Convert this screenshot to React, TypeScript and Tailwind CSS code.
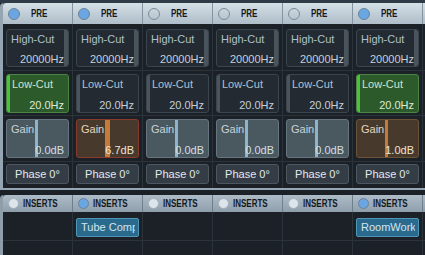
import React from 'react';

type Strip = {
  pre: 'on' | 'off';
  lowCut: boolean;
  gain: number;
  gainBorder?: string;
  insertLed: 'blue' | 'white';
  insert?: string;
};

const strips: Strip[] = [
  { pre: 'on', lowCut: true, gain: 0, insertLed: 'white' },
  { pre: 'on', lowCut: false, gain: 6.7, gainBorder: 'border-[#8a3a2c]', insertLed: 'blue', insert: 'Tube Comp' },
  { pre: 'off', lowCut: false, gain: 0, insertLed: 'white' },
  { pre: 'off', lowCut: false, gain: 0, insertLed: 'white' },
  { pre: 'off', lowCut: false, gain: 0, insertLed: 'white' },
  { pre: 'on', lowCut: true, gain: 1.0, gainBorder: 'border-[#6c5236]', insertLed: 'blue', insert: 'RoomWorks' },
];

function Led({ kind, size = 'w-[12px] h-[12px]' }: { kind: 'blue' | 'white' | 'off'; size?: string }) {
  if (kind === 'blue') return <span className={`${size} shrink-0 rounded-full bg-[#6aa6e2] border border-[#6b8399]`} />;
  if (kind === 'white') return <span className={`${size} shrink-0 rounded-full bg-[#dde5eb] border border-[#a2b0ba]`} />;
  return <span className={`${size} shrink-0 rounded-full border border-[#7a8a96]`} />;
}

function Cell({ children, className = '' }: { children?: React.ReactNode; className?: string }) {
  return <div className={`w-[70px] shrink-0 border-r border-[#2b343b] px-[3px] ${className}`}>{children}</div>;
}

// next strip, only its left edge shows at the window border
function Stub() {
  return <div className="w-[10px] shrink-0" />;
}

function HighCut() {
  return (
    <div className="relative h-[38px] rounded-[3px] border border-[#3b454d] bg-[#232a31] flex flex-col justify-between pl-[4px] pr-[4px] pt-[2px] text-[11px] leading-[14px]">
      <div className="absolute right-0 top-0 bottom-0 w-[4px] rounded-r-[2px] bg-[#4a545d]" />
      <span className="text-[#afc1ce]">High-Cut</span>
      <span className="text-right text-[#c3d1db]">20000Hz</span>
    </div>
  );
}

function LowCut({ on }: { on: boolean }) {
  return (
    <div
      className={`relative h-[39px] rounded-[3px] border flex flex-col justify-between pl-[5px] pr-[4px] pt-[2px] text-[11px] leading-[14px] ${
        on ? 'bg-[#2d5a2b] border-[#4b8444]' : 'bg-[#232a31] border-[#3b454d]'
      }`}
    >
      <div className={`absolute left-0 top-0 bottom-0 w-[3px] rounded-l-[2px] ${on ? 'bg-[#4cc23c]' : 'bg-[#4a545d]'}`} />
      <span className={on ? 'text-[#cfe2cc]' : 'text-[#afc1ce]'}>Low-Cut</span>
      <span className={`text-right ${on ? 'text-[#dcebd8]' : 'text-[#c3d1db]'}`}>20.0Hz</span>
    </div>
  );
}

function Gain({ value, border }: { value: number; border?: string }) {
  const active = value !== 0;
  return (
    <div
      className={`relative h-[39px] rounded-[3px] border flex flex-col justify-between pl-[4px] pr-[4px] pt-[2px] text-[11px] leading-[14px] ${
        active ? `bg-[#47392b] ${border}` : 'bg-[#4a5860] border-[#66757f]'
      }`}
    >
      <div
        className={`absolute left-[28px] top-0 bottom-0 ${active ? 'bg-[#c47a38]' : 'bg-[#8fb3c9]'}`}
        style={{ width: 3 + Math.round(value * 0.3) }}
      />
      <span className={`relative ${active ? 'text-[#e4d6c4]' : 'text-[#c7d4dc]'}`}>Gain</span>
      <span className={`relative text-right ${active ? 'text-[#efe3d3]' : 'text-[#d3dee5]'}`}>{value.toFixed(1)}dB</span>
    </div>
  );
}

export default function App() {
  return (
    <div className="w-[425px] h-[255px] overflow-hidden bg-[#1b2127] font-['Liberation_Sans',Arial,sans-serif]">
      <div className="h-[3px] bg-[#2f3b46]" />

      {/* PRE section */}
      <div className="flex flex-col border-l-[3px] border-b-2 border-[#95a5b1] rounded-tl-[4px] w-max">
        <div className="flex h-[21px] bg-linear-to-b from-[#d6e0e7] to-[#aebdc8] rounded-tl-[3px]">
          {strips.map((s, i) => (
            <div key={i} className="w-[70px] shrink-0 border-r border-[#8393a0] flex items-center pl-[5px] gap-[11px]">
              <Led kind={s.pre === 'on' ? 'blue' : 'off'} />
              <span className="inline-block origin-left scale-x-[0.8] text-[10px] font-bold text-[#15191d]">PRE</span>
            </div>
          ))}
          <Stub />
        </div>

        <div className="flex border-b border-[#2b343b]">
          {strips.map((_, i) => (
            <Cell key={i} className="pt-[5px] pb-[3px]">
              <HighCut />
            </Cell>
          ))}
          <Stub />
        </div>

        <div className="flex border-b border-[#2b343b]">
          {strips.map((s, i) => (
            <Cell key={i} className="pt-[3px] pb-[2px]">
              <LowCut on={s.lowCut} />
            </Cell>
          ))}
          <Stub />
        </div>

        <div className="flex border-b border-[#2b343b]">
          {strips.map((s, i) => (
            <Cell key={i} className="pt-[3px] pb-[3px]">
              <Gain value={s.gain} border={s.gainBorder} />
            </Cell>
          ))}
          <Stub />
        </div>

        <div className="flex">
          {strips.map((_, i) => (
            <Cell key={i} className="pt-[2px] pb-[4px]">
              <div className="h-[20px] rounded-[3px] border border-[#4c5760] bg-[#343d45] flex items-center justify-center text-[11px] text-[#e3eaef]">
                Phase 0°
              </div>
            </Cell>
          ))}
          <Stub />
        </div>
      </div>

      {/* INSERTS section */}
      <div className="mt-[5px] flex flex-col border-l-[3px] border-[#8d9da9] rounded-tl-[4px] w-max">
        <div className="flex h-[17px] bg-linear-to-b from-[#aebcc7] to-[#8e9fac] rounded-tl-[3px]">
          {strips.map((s, i) => (
            <div key={i} className="w-[70px] shrink-0 border-r border-[#6f808c] flex items-center pl-[5px] gap-[4px]">
              <Led kind={s.insertLed} size="w-[11px] h-[11px]" />
              <span className="inline-block origin-left scale-x-[0.8] text-[10px] font-bold text-[#15191d]">INSERTS</span>
            </div>
          ))}
          <Stub />
        </div>

        <div className="flex border-b border-[#2b343b]">
          {strips.map((s, i) => (
            <Cell key={i} className="pt-[6px] pb-[3px] h-[28px]">
              {s.insert && (
                <div className="h-[19px] rounded-[2px] border border-[#4f95b8] bg-[#2a6b8d] pl-[4px] pr-[3px] text-[11px] leading-[17px] text-[#d5e4ee]">
                  <div className="overflow-hidden whitespace-nowrap">{s.insert}</div>
                </div>
              )}
            </Cell>
          ))}
          <Stub />
        </div>

        <div className="flex h-[20px]">
          {strips.map((_, i) => (
            <Cell key={i} />
          ))}
          <Stub />
        </div>
      </div>
    </div>
  );
}
